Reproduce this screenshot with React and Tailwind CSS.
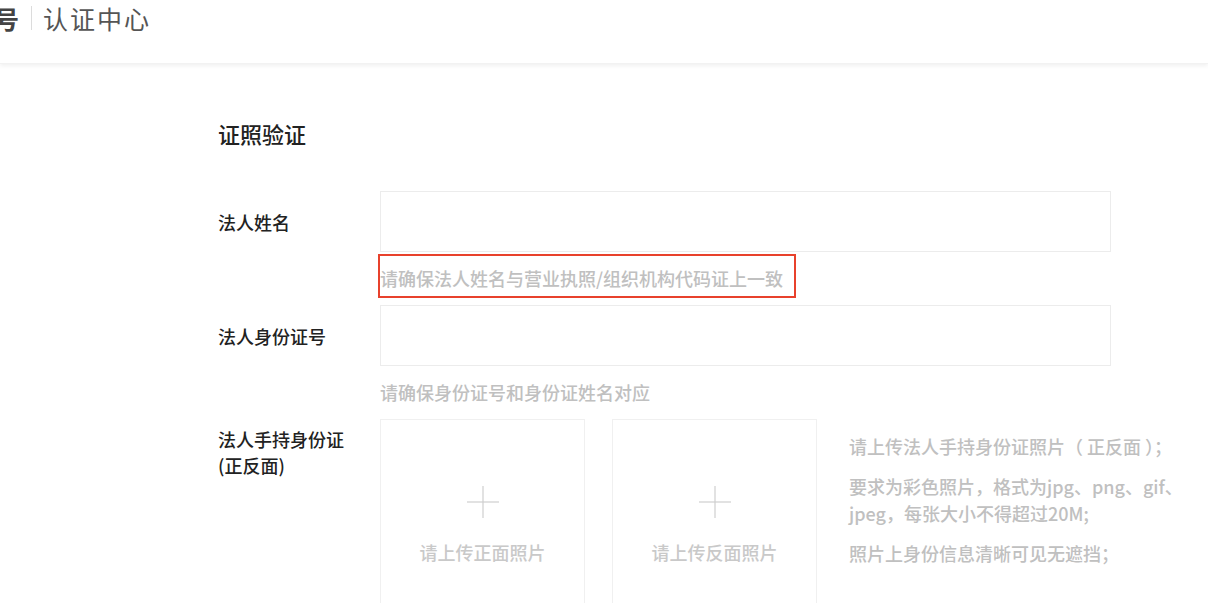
import React from 'react';

const font = { fontFamily: '"Noto Sans CJK SC", "Noto Sans", sans-serif' };

const Plus = () => (
  <svg width="32" height="32" viewBox="0 0 32 32" className="block">
    <line x1="16" y1="0" x2="16" y2="32" stroke="#cfcfcf" strokeWidth="1.2" />
    <line x1="0" y1="16" x2="32" y2="16" stroke="#cfcfcf" strokeWidth="1.2" />
  </svg>
);

const UploadBox = ({ label }) => (
  <div className="w-[205px] h-[205px] shrink-0 border border-[#f0f0f0] bg-white flex flex-col items-center">
    <div className="mt-[66px]">
      <Plus />
    </div>
    <div className="mt-[21px] text-[18px] leading-[26px] font-medium text-[#c9c9c9]">{label}</div>
  </div>
);

export default function App() {
  return (
    <div className="min-h-screen bg-white overflow-hidden" style={font}>
      {/* Header */}
      <div className="h-[64px] bg-white shadow-[0_2px_4px_rgba(0,0,0,0.06)] border-b border-[#f2f2f2]">
        <div className="h-[36px] flex items-center">
          <span className="-ml-[6px] text-[25px] font-bold text-[#444] leading-none">号</span>
          <span className="ml-[12px] w-px h-[24px] bg-[#dcdcdc]" />
          <span className="ml-[11px] text-[25px] text-[#555] leading-none tracking-[2px]">认证中心</span>
        </div>
      </div>

      {/* Body */}
      <div className="pl-[218px]">
        <div className="mt-[55px] h-[28px] leading-[28px] text-[22px] font-medium text-[#222]">证照验证</div>

        {/* Row 1 */}
        <div className="mt-[44px] flex">
          <div className="w-[162px] shrink-0 h-[60px] flex items-center pt-[3px] text-[18px] font-medium text-[#222]">法人姓名</div>
          <div className="w-[731px] h-[61px] border border-[#ececec] bg-white" />
        </div>
        <div className="flex">
          <div className="w-[162px] shrink-0" />
          <div className="relative h-[53px] flex items-center text-[18px] font-medium text-[#c0c0c0]">
            请确保法人姓名与营业执照/组织机构代码证上一致
            <div className="absolute left-[-2px] top-[2px] w-[418px] h-[44px] border-2 border-[#e8412c]" />
          </div>
        </div>

        {/* Row 2 */}
        <div className="flex">
          <div className="w-[162px] shrink-0 h-[60px] flex items-center pt-[3px] text-[18px] font-medium text-[#222]">法人身份证号</div>
          <div className="w-[731px] h-[61px] border border-[#ececec] bg-white" />
        </div>
        <div className="flex">
          <div className="w-[162px] shrink-0" />
          <div className="h-[53px] flex items-center text-[18px] font-medium text-[#c0c0c0]">请确保身份证号和身份证姓名对应</div>
        </div>

        {/* Row 3 */}
        <div className="flex">
          <div className="w-[162px] shrink-0 pt-[7px] text-[18px] leading-[26px] font-medium text-[#222]">
            法人手持身份证
            <br />
            (正反面)
          </div>
          <div className="flex gap-[27px]">
            <UploadBox label="请上传正面照片" />
            <UploadBox label="请上传反面照片" />
          </div>
          <div className="ml-[32px] pt-[14px] text-[18px] leading-[27px] font-medium text-[#c0c0c0] space-y-[13px]">
            <p>请上传法人手持身份证照片（ 正反面 ）；</p>
            <p>
              要求为彩色照片，格式为jpg、png、gif、
              <br />
              jpeg，每张大小不得超过20M;
            </p>
            <p>照片上身份信息清晰可见无遮挡；</p>
          </div>
        </div>
      </div>
    </div>
  );
}
